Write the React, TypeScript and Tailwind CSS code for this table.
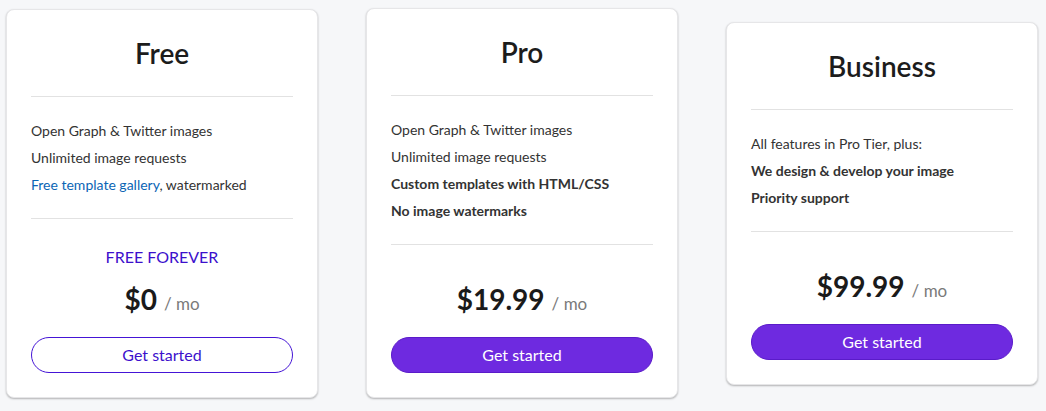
import type { ReactNode } from 'react'

type Plan = {
  name: string
  features: ReactNode[]
  tagline?: string
  price: string
  outline?: boolean
}

const plans: Plan[] = [
  {
    name: 'Free',
    features: [
      'Open Graph & Twitter images',
      'Unlimited image requests',
      <>
        <a href="#" className="text-[#0b65b5]">
          Free template gallery
        </a>
        , watermarked
      </>,
    ],
    tagline: 'FREE FOREVER',
    price: '$0',
    outline: true,
  },
  {
    name: 'Pro',
    features: [
      'Open Graph & Twitter images',
      'Unlimited image requests',
      <span className="font-bold">Custom templates with HTML/CSS</span>,
      <span className="font-bold">No image watermarks</span>,
    ],
    price: '$19.99',
  },
  {
    name: 'Business',
    features: [
      'All features in Pro Tier, plus:',
      <span className="font-bold">We design &amp; develop your image</span>,
      <span className="font-bold">Priority support</span>,
    ],
    price: '$99.99',
  },
]

function PlanCard({ plan }: { plan: Plan }) {
  return (
    <div className="w-[312px] shrink-0 bg-white rounded-lg border border-[#e6e6e8] shadow-[0_1px_2px_rgba(0,0,0,0.28)] px-6 pt-6 pb-6">
      <h2 className="h-[38px] text-center text-[28px] leading-[38px] font-semibold text-[#1c1c1c]">
        {plan.name}
      </h2>
      <div className="mt-6 h-px bg-[#e2e2e2]" />
      <ul className="pt-5 pb-5 text-[14px] text-[#333]">
        {plan.features.map((f, i) => (
          <li key={i} className="leading-[27px]">
            {f}
          </li>
        ))}
      </ul>
      <div className="h-px bg-[#e2e2e2]" />
      {plan.tagline ? (
        <p className="pt-[26px] h-[50px] text-center text-[16px] leading-6 text-[#3c10cc]">
          {plan.tagline}
        </p>
      ) : null}
      <div
        className={`flex items-baseline justify-center gap-[7px] h-10 ${plan.tagline ? 'mt-[10px]' : 'mt-[34px]'}`}
      >
        <span className="text-[28px] leading-10 font-bold text-[#1a1a1a]">{plan.price}</span>
        <span className="text-[17px] text-[#7a7a7a]">/ mo</span>
      </div>
      <button
        className={
          plan.outline
            ? 'mt-[18px] w-full h-9 rounded-full border border-[#4515d6] bg-white text-[#3c10cc] text-[16px]'
            : 'mt-[18px] w-full h-9 rounded-full border border-[#5a1bc9] bg-[#6e2ae0] text-white text-[16px]'
        }
      >
        Get started
      </button>
    </div>
  )
}

export default function App() {
  return (
    <div
      className="w-[1046px] h-[411px] bg-[#f6f7f9] flex items-center gap-12 pl-[6px] pb-[5px]"
      style={{ fontFamily: 'Lato, "Open Sans", sans-serif' }}
    >
      {plans.map(p => (
        <PlanCard key={p.name} plan={p} />
      ))}
    </div>
  )
}
